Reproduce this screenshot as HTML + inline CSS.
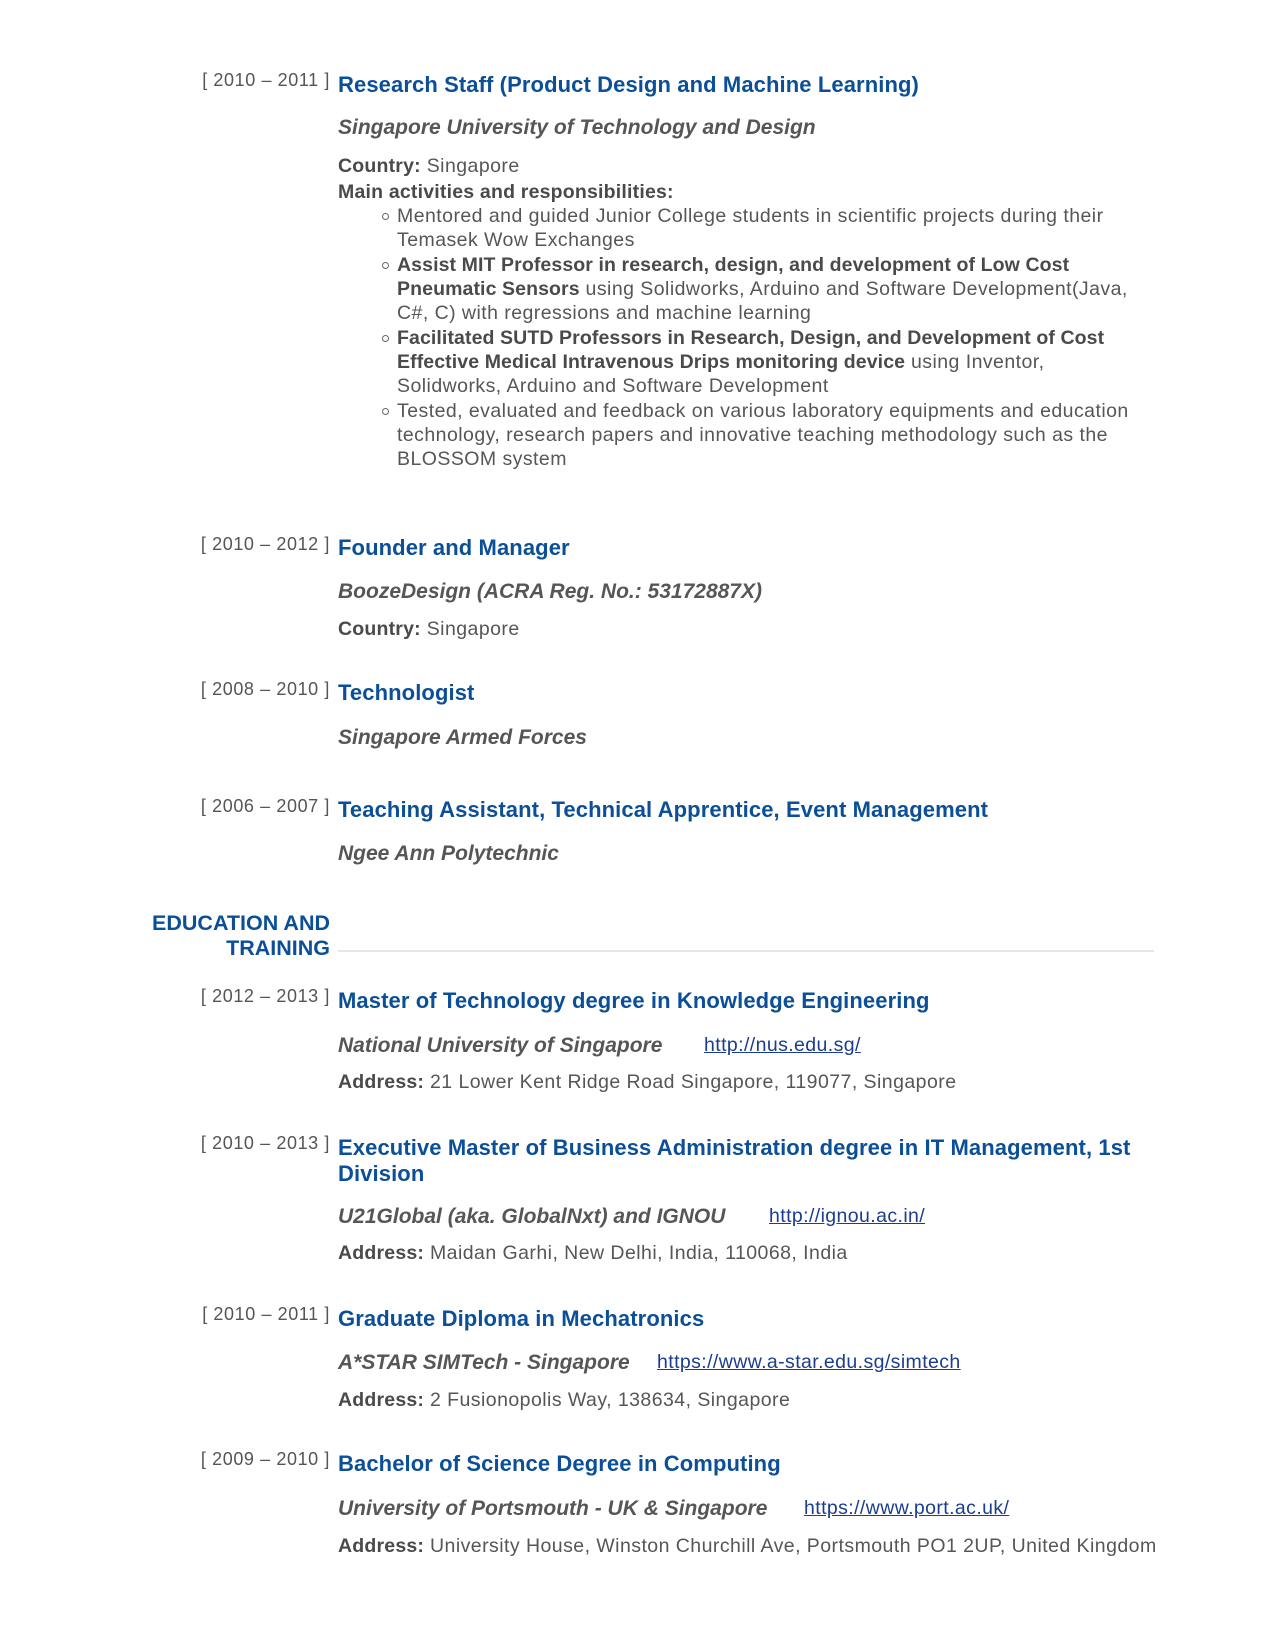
<!DOCTYPE html>
<html><head><meta charset="utf-8">
<style>
html,body{margin:0;padding:0;background:#fff;}
body{width:1275px;height:1650px;position:relative;overflow:hidden;font-family:"Liberation Sans",Arial,sans-serif;color:#565656;}
.a{position:absolute;white-space:nowrap;}
.d{right:945px;font-size:18px;letter-spacing:0.6px;color:#555;line-height:20px;}
.t{left:338px;font-size:22px;letter-spacing:0.1px;font-weight:bold;color:#0b4f98;line-height:26px;}
.c{left:338px;font-size:21px;font-weight:bold;font-style:italic;color:#565656;line-height:26px;}
.b{left:338px;font-size:19.5px;letter-spacing:0.45px;line-height:24.1px;color:#565656;}
.b b{color:#4a4a4a;letter-spacing:0.2px;}
.li{left:397px;font-size:19.5px;letter-spacing:0.45px;line-height:24.1px;color:#565656;}
.li b{color:#4a4a4a;letter-spacing:0.1px;}
.dot{position:absolute;left:382px;width:5px;height:5px;border:1px solid #666;border-radius:50%;}
.u{font-size:19.5px;letter-spacing:0.4px;color:#1a3d8f;text-decoration:underline;line-height:26px;}
.h{right:945px;text-align:right;font-size:21.5px;font-weight:bold;color:#0b4f98;line-height:25px;}
.line{position:absolute;left:338px;width:816px;top:950px;height:2px;background:#e6e6e6;}
</style></head><body>

<div class="a d" style="top:70px">[ 2010 – 2011 ]</div>
<div class="a t" style="top:72px">Research Staff (Product Design and Machine Learning)</div>
<div class="a c" style="top:115px">Singapore University of Technology and Design</div>
<div class="a b" style="top:154px"><b>Country:</b> Singapore</div>
<div class="a b" style="top:180px"><b>Main activities and responsibilities:</b></div>
<div class="dot" style="top:213px"></div>
<div class="a li" style="top:204px">Mentored and guided Junior College students in scientific projects during their<br>Temasek Wow Exchanges</div>
<div class="dot" style="top:262px"></div>
<div class="a li" style="top:253px"><b>Assist MIT Professor in research, design, and development of Low Cost<br>Pneumatic Sensors</b> using Solidworks, Arduino and Software Development(Java,<br>C#, C) with regressions and machine learning</div>
<div class="dot" style="top:335px"></div>
<div class="a li" style="top:326px"><b>Facilitated SUTD Professors in Research, Design, and Development of Cost<br>Effective Medical Intravenous Drips monitoring device</b> using Inventor,<br>Solidworks, Arduino and Software Development</div>
<div class="dot" style="top:408px"></div>
<div class="a li" style="top:399px">Tested, evaluated and feedback on various laboratory equipments and education<br>technology, research papers and innovative teaching methodology such as the<br>BLOSSOM system</div>

<div class="a d" style="top:534px">[ 2010 – 2012 ]</div>
<div class="a t" style="top:535px">Founder and Manager</div>
<div class="a c" style="top:579px">BoozeDesign (ACRA Reg. No.: 53172887X)</div>
<div class="a b" style="top:617px"><b>Country:</b> Singapore</div>

<div class="a d" style="top:679px">[ 2008 – 2010 ]</div>
<div class="a t" style="top:680px">Technologist</div>
<div class="a c" style="top:725px">Singapore Armed Forces</div>

<div class="a d" style="top:796px">[ 2006 – 2007 ]</div>
<div class="a t" style="top:797px">Teaching Assistant, Technical Apprentice, Event Management</div>
<div class="a c" style="top:841px">Ngee Ann Polytechnic</div>

<div class="a h" style="top:911px">EDUCATION AND<br>TRAINING</div>
<div class="line"></div>

<div class="a d" style="top:986px">[ 2012 – 2013 ]</div>
<div class="a t" style="top:988px">Master of Technology degree in Knowledge Engineering</div>
<div class="a c" style="top:1033px">National University of Singapore</div>
<div class="a u" style="left:704px;top:1032px">http://nus.edu.sg/</div>
<div class="a b" style="top:1070px"><b>Address:</b> 21 Lower Kent Ridge Road Singapore, 119077, Singapore</div>

<div class="a d" style="top:1133px">[ 2010 – 2013 ]</div>
<div class="a t" style="top:1135px">Executive Master of Business Administration degree in IT Management, 1st<br>Division</div>
<div class="a c" style="top:1204px">U21Global (aka. GlobalNxt) and IGNOU</div>
<div class="a u" style="left:769px;top:1203px">http://ignou.ac.in/</div>
<div class="a b" style="top:1241px"><b>Address:</b> Maidan Garhi, New Delhi, India, 110068, India</div>

<div class="a d" style="top:1304px">[ 2010 – 2011 ]</div>
<div class="a t" style="top:1306px">Graduate Diploma in Mechatronics</div>
<div class="a c" style="top:1350px">A*STAR SIMTech - Singapore</div>
<div class="a u" style="left:657px;top:1349px">https://www.a-star.edu.sg/simtech</div>
<div class="a b" style="top:1388px"><b>Address:</b> 2 Fusionopolis Way, 138634, Singapore</div>

<div class="a d" style="top:1449px">[ 2009 – 2010 ]</div>
<div class="a t" style="top:1451px">Bachelor of Science Degree in Computing</div>
<div class="a c" style="top:1496px">University of Portsmouth - UK &amp; Singapore</div>
<div class="a u" style="left:804px;top:1495px">https://www.port.ac.uk/</div>
<div class="a b" style="top:1534px"><b>Address:</b> University House, Winston Churchill Ave, Portsmouth PO1 2UP, United Kingdom</div>

</body></html>
